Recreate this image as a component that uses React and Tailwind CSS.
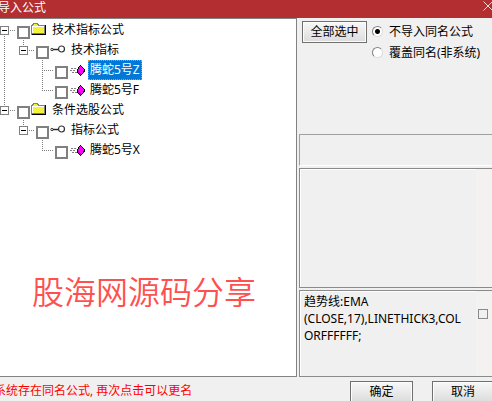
import clsx from "clsx";

// gutter: one cell per level, left to right
const rows = [
	{ id: "t1", gutter: ["nodeFirst"], icon: "folder", text: "技术指标公式" },
	{ id: "t2", gutter: ["line", "nodeLast"], icon: "key", text: "技术指标" },
	{ id: "t3", gutter: ["line", "blank", "tee"], icon: "gem", text: "腾蛇5号Z", selected: true },
	{ id: "t4", gutter: ["line", "blank", "corner"], icon: "gem", text: "腾蛇5号F" },
	{ id: "t5", gutter: ["nodeLast"], icon: "folder", text: "条件选股公式" },
	{ id: "t6", gutter: ["blank", "nodeLast"], icon: "key", text: "指标公式" },
	{ id: "t7", gutter: ["blank", "blank", "corner"], icon: "gem", text: "腾蛇5号X" },
];

const lines = {
	blank: "",
	line: "M4.5 0V20",
	tee: "M4.5 0V20M6 10.5H16",
	corner: "M4.5 0V10M4 10.5H16",
	nodeFirst: "M4.5 16V20M10 10.5H16",
	nodeLast: "M4.5 0V6M10 10.5H16",
};

const Gutter = ({ kind, last }) => (
	<svg
		className={clsx("h-5 shrink-0", last ? "w-[17px]" : "w-[19px]")}
		shapeRendering="crispEdges"
		fill="none"
	>
		<path d={lines[kind]} stroke="#808080" strokeDasharray="1 1" />
		{kind.startsWith("node") && (
			<>
				<rect x="0.5" y="6.5" width="8" height="8" fill="#fff" stroke="#808080" />
				<path d="M2 10.5H7" stroke="#000" />
			</>
		)}
	</svg>
);

const FolderIcon = () => (
	<svg className="size-4 shrink-0" viewBox="0 0 16 16" shapeRendering="crispEdges">
		<defs>
			<pattern id="dither" width="2" height="2" patternUnits="userSpaceOnUse">
				<rect width="2" height="2" fill="#f4f43c" />
				<rect width="1" height="1" fill="#dcdcdc" />
				<rect x="1" y="1" width="1" height="1" fill="#dcdcdc" />
			</pattern>
		</defs>
		<path d="M1 13V3H2V2H3V1H7V2H8V3H14V13Z" fill="url(#dither)" />
		<path d="M2 4.5H13M1.5 4V12" fill="none" stroke="#fff" />
		<path d="M0.5 13V3.5H1.5V2.5H2.5V1.5H6.5V2.5H7.5V3.5H14" fill="none" stroke="#808080" />
		<path d="M13.5 4V12M1 11.5H14" fill="none" stroke="#808080" />
		<path d="M1 12.5H14.5V3" fill="none" stroke="#000" />
	</svg>
);

const KeyIcon = () => (
	<svg className="size-4 shrink-0" viewBox="0 0 16 16" fill="none">
		<circle cx="2" cy="7.5" r="1.2" stroke="#333" />
		<path d="M3 7.5H9" stroke="#222" strokeWidth="1.4" />
		<circle cx="11.5" cy="7" r="3" stroke="#333" strokeWidth="1.2" />
	</svg>
);

const GemIcon = () => (
	<svg className="size-4 shrink-0" viewBox="0 0 16 16" shapeRendering="crispEdges">
		<path d="M2 6.5H7M1 8.5H7M3 10.5H8" stroke="#808080" strokeDasharray="2 1" />
		<path d="M11 3H12V4H13V5H14V6H15V7H16V10H15V11H14V12H13V13H12V14H11V13H10V12H9V11H8V7H9V5H10V4H11Z" fill="#000" />
		<path d="M11 4H12V5H13V6H14V7H15V9H14V11H13V12H12V13H11V12H10V11H9V7H10V5H11Z" fill="#f0f" />
		<path d="M9 9H10V10H11V11H12V13H11V12H10V11H9Z" fill="#b000b0" />
	</svg>
);

const icons = { folder: FolderIcon, key: KeyIcon, gem: GemIcon };

const TreeRow = ({ row }) => {
	const Icon = icons[row.icon];
	return (
		<li className="flex h-5 items-start">
			{row.gutter.map((kind, i) => (
				<Gutter key={i} kind={kind} last={i === row.gutter.length - 1} />
			))}
			<input
				id={row.id}
				type="checkbox"
				className="mt-1.5 size-[13px] shrink-0 appearance-none border-2 border-[#808080] bg-white checked:bg-[#808080]"
			/>
			<label htmlFor={row.id} className="ml-px flex items-start gap-[3px] whitespace-nowrap">
				<span className="pt-0.5">
					<Icon />
				</span>
				<span
					className={clsx(
						"h-5 px-0.5 leading-5",
						row.selected && "bg-[#0078d7] text-white outline-1 -outline-offset-1 outline-dotted outline-[#ff8728]"
					)}
				>
					{row.text}
				</span>
			</label>
		</li>
	);
};

const Button = ({ children, className }) => (
	<button
		type="button"
		className={clsx(
			"h-[22px] border border-[#707070] bg-gradient-to-b from-[#f8f8f8] to-[#dcdcdc] leading-5 shadow-[inset_0_0_0_1px_#fcfcfc]",
			className
		)}
	>
		{children}
	</button>
);

const Radio = ({ label, defaultChecked }) => (
	<label className="flex h-[21px] items-center gap-1.5 whitespace-nowrap">
		<input
			type="radio"
			name="duplicate"
			defaultChecked={defaultChecked}
			className="size-[11px] appearance-none rounded-full border border-[#808080] border-r-[#dcdcdc] border-b-[#dcdcdc] bg-white checked:bg-[radial-gradient(circle,#000_2px,#fff_3px)]"
		/>
		{label}
	</label>
);

export default function App() {
	return (
		<div className="flex h-screen flex-col overflow-hidden bg-[#f0f0f0] font-['Noto_Sans','Noto_Sans_CJK_SC',sans-serif] text-xs text-black">
			<header className="flex h-[18px] shrink-0 items-start justify-between bg-[#b22e31] text-white">
				<h1 className="-ml-0.5 leading-4">导入公式</h1>
				<button type="button" aria-label="关闭" className="pt-px">
					<svg className="block h-[10px] w-[9px]" viewBox="0 0 9 10" stroke="#f0d8d9">
						<path d="M0.5 0.5L9.5 9.5M9.5 0.5L0.5 9.5" />
					</svg>
				</button>
			</header>

			<main className="grid min-h-0 flex-1 grid-cols-[297fr_195fr]">
				<section className="border-t border-r border-b border-[#828282] bg-white pt-px">
					<ul>
						{rows.map((row) => (
							<TreeRow key={row.id} row={row} />
						))}
					</ul>
					<p className="mt-28 px-8 text-[32px] leading-10 font-[350] whitespace-nowrap text-[#ff5050]">股海网源码分享</p>
				</section>

				<section className="flex min-w-0 flex-col gap-0.5 pl-0.5">
					<div className="flex h-[114px] items-start gap-[5px] pt-[3px] pl-[3px]">
						<Button className="w-[65px]">全部选中</Button>
						<fieldset>
							<Radio label="不导入同名公式" defaultChecked />
							<Radio label="覆盖同名(非系统)" />
						</fieldset>
					</div>
					<div className="h-8 border-t border-b border-l border-[#a0a0a0] border-b-white" />
					<div className="flex flex-1 justify-end border-t border-b border-l border-[#8a8a8a] shadow-[inset_1px_1px_0_#fff]">
						<div className="w-4 bg-[#f3f2f0]" />
					</div>
					<div className="flex h-[87px] border border-r-0 border-[#8a8a8a] shadow-[inset_1px_1px_0_#fff]">
						<p className="min-w-0 flex-1 pt-0.5 pl-1 leading-[17px]">
							趋势线:EMA
							<br />
							(CLOSE,17),LINETHICK3,COL
							<br />
							ORFFFFFF;
						</p>
						<div className="w-4 shrink-0 bg-[#f3f2f0] pt-[18px] pl-0.5">
							<input
								type="checkbox"
								aria-label="公式"
								className="block size-[10px] appearance-none border border-[#8a8a8a] bg-[#f0f0f0] checked:bg-[#8a8a8a]"
							/>
						</div>
					</div>
				</section>
			</main>

			<footer className="flex h-6 shrink-0 items-start justify-between pt-1">
				<p className="-ml-1.5 leading-5 whitespace-nowrap text-[#f00]">系统存在同名公式, 再次点击可以更名</p>
				<div className="flex gap-[19px]">
					<Button className="w-[63px]">确定</Button>
					<Button className="-mr-0.5 w-[62px]">取消</Button>
				</div>
			</footer>
		</div>
	);
}
